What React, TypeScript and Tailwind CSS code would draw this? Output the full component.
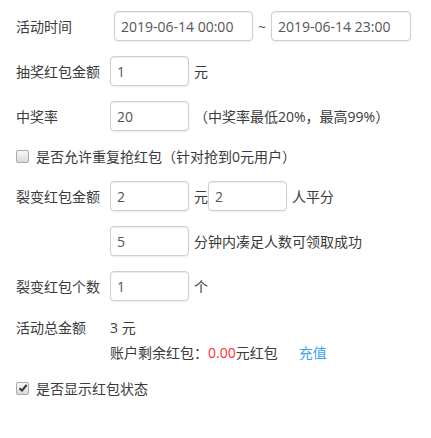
import React from "react";

const font = { fontFamily: '"Open Sans", "Noto Sans CJK SC", sans-serif' };

const inputCls =
  "h-[30px] rounded-[4px] border border-[#cfcfcf] bg-white px-[6px] text-[14px] text-[#555] shadow-[inset_0_1px_1px_rgba(0,0,0,0.075),0_1px_2px_rgba(0,0,0,0.08)] outline-none";

function Box({ checked }: { checked?: boolean }) {
  return (
    <span className="relative flex h-[13px] w-[13px] shrink-0 items-center justify-center rounded-[2px] border border-[#a9a9a9] bg-gradient-to-b from-[#f7f7f7] to-[#dadada]">
      {checked && (
        <svg width="10" height="10" viewBox="0 0 10 10">
          <path d="M1.5 5.2 L4 7.6 L8.6 2" fill="none" stroke="#333" strokeWidth="2" />
        </svg>
      )}
    </span>
  );
}

function Row({
  label,
  className,
  children,
}: {
  label?: string;
  className?: string;
  children: React.ReactNode;
}) {
  return (
    <div className={"flex h-[30px] items-center " + (className ?? "")}>
      <div className="w-[94px] shrink-0 text-[#3a3a3a]">{label}</div>
      {children}
    </div>
  );
}

export default function App() {
  return (
    <div className="h-[438px] w-[431px] bg-white pl-[16px] text-[14px] text-[#3a3a3a]" style={font}>
      <div className="flex flex-col">
        <div className="mt-[11px] flex h-[30px] items-center">
          <div className="w-[98px] shrink-0">活动时间</div>
          <input className={inputCls + " w-[139px]"} defaultValue="2019-06-14 00:00" />
          <span className="mx-[5px] text-[#555]">~</span>
          <input className={inputCls + " w-[140px]"} defaultValue="2019-06-14 23:00" />
        </div>

        <Row label="抽奖红包金额" className="mt-[15px]">
          <input className={inputCls + " w-[79px]"} defaultValue="1" />
          <span className="ml-[5px]">元</span>
        </Row>

        <Row label="中奖率" className="mt-[15px]">
          <input className={inputCls + " w-[79px]"} defaultValue="20" />
          <span className="ml-[5px]">（中奖率最低20%，最高99%）</span>
        </Row>

        <div className="mt-[10px] flex h-[30px] items-center gap-[7px]">
          <Box />
          <span>是否允许重复抢红包（针对抢到0元用户）</span>
        </div>

        <Row label="裂变红包金额" className="mt-[10px]">
          <input className={inputCls + " w-[79px]"} defaultValue="2" />
          <span className="ml-[5px]">元</span>
          <input className={inputCls + " w-[79px]"} defaultValue="2" />
          <span className="ml-[5px]">人平分</span>
        </Row>

        <Row className="mt-[15px]">
          <input className={inputCls + " w-[79px]"} defaultValue="5" />
          <span className="ml-[5px]">分钟内凑足人数可领取成功</span>
        </Row>

        <Row label="裂变红包个数" className="mt-[15px]">
          <input className={inputCls + " w-[79px]"} defaultValue="1" />
          <span className="ml-[5px]">个</span>
        </Row>

        <div className="mt-[16px] flex h-[20px] items-center">
          <div className="w-[94px] shrink-0">活动总金额</div>
          <span>3 元</span>
        </div>

        <div className="mt-[5px] flex h-[20px] items-center pl-[94px]">
          <span>账户剩余红包：</span>
          <span className="text-[#ff2d2d]">0.00</span>
          <span>元红包</span>
          <span className="ml-[21px] text-[#3aa3ef]">充值</span>
        </div>

        <div className="mt-[16px] flex h-[20px] items-center gap-[7px]">
          <Box checked />
          <span>是否显示红包状态</span>
        </div>
      </div>
    </div>
  );
}
